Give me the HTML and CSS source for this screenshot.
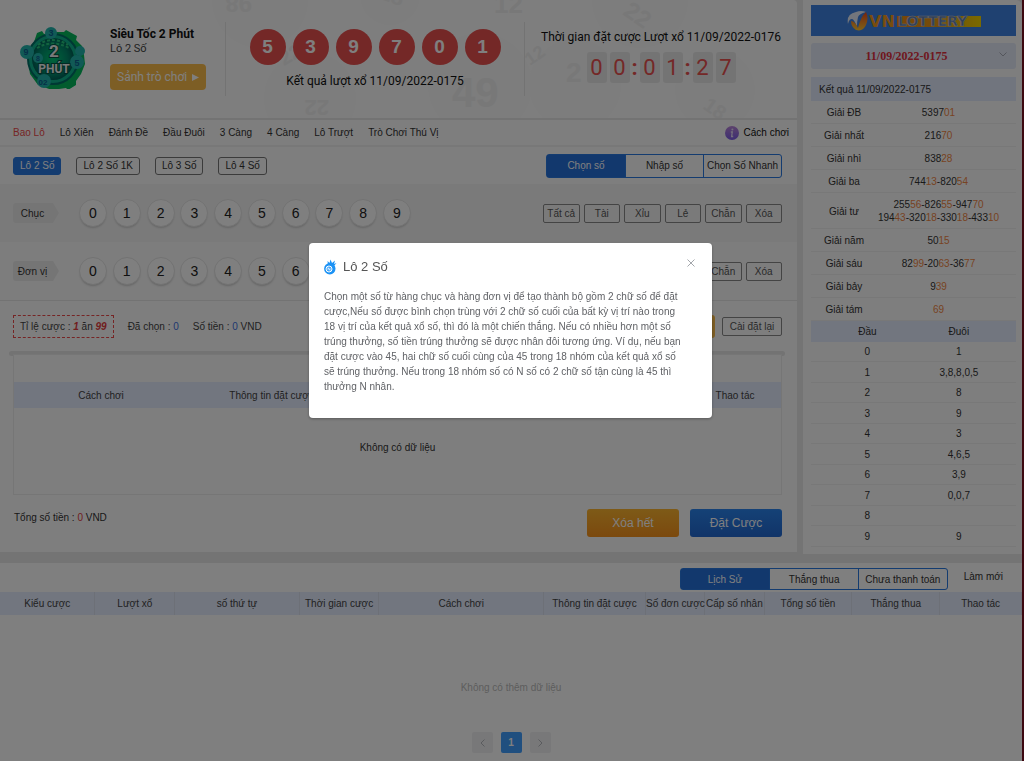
FILE: index.html
```html
<!DOCTYPE html>
<html lang="vi">
<head>
<meta charset="utf-8">
<title>Siêu Tốc 2 Phút</title>
<link rel="stylesheet" href="styles.css">
</head>
<body>
<div class="page">
  <div class="top">
    <main class="game">
      <header class="banner">
        <svg class="banner-art" viewBox="0 0 797 119" preserveAspectRatio="xMinYMin slice" aria-hidden="true">
          <g fill="#fafafa"><circle cx="260" cy="0" r="48"/><circle cx="390" cy="-5" r="30"/><circle cx="310" cy="98" r="46"/><circle cx="480" cy="85" r="52"/><circle cx="640" cy="0" r="48"/><circle cx="575" cy="85" r="46"/><circle cx="715" cy="90" r="40"/></g>
          <g fill="#f0f0f0" font-family="Liberation Sans, sans-serif" font-weight="700">
            <text font-size="24" transform="translate(252 -5) rotate(180)">98</text>
            <text font-size="22" transform="translate(378 -2) rotate(20)">18</text>
            <text x="494" y="13" font-size="26">12</text>
            <text font-size="22" transform="translate(329 100) rotate(180)">22</text>
            <text x="452" y="107" font-size="42">49</text>
            <text font-size="24" transform="translate(622 14) rotate(35)">22</text>
            <text x="566" y="82" font-size="28">2</text>
            <text font-size="20" transform="translate(702 108) rotate(35)">18</text>
            <text font-size="20" transform="translate(284 66) rotate(-30)">22</text>
            <text font-size="18" transform="translate(530 66) rotate(-35)">12</text>
          </g>
        </svg>
        <svg class="game-logo" viewBox="0 0 66 64" role="img" aria-label="2 Phút">
          <defs><radialGradient id="disc"><stop offset="0" stop-color="#00c878"/><stop offset=".7" stop-color="#008b6c"/><stop offset="1" stop-color="#006058"/></radialGradient></defs>
          <path d="M17 8l5-2 2 3 8-2 12 0 2-2 11 6-1 4 6 6 2 9 1 9-4 10-5 7 0 4-8 5-2-2-14 2-14-5-8-11-2-13 4-13z" fill="#04b85c"/>
          <circle cx="33" cy="34" r="25" fill="#0eb38c" stroke="#007068" stroke-width="2"/>
          <circle cx="33" cy="34" r="21" fill="url(#disc)"/>
          <path d="M18 20q14-10 30 0M17 23q15-9 32 0" fill="none" stroke="#25c77e" stroke-width="2" stroke-dasharray="3 2"/>
          <g fill="#22b5ac"><circle cx="31" cy="8" r="6"/><circle cx="7" cy="27" r="7"/><circle cx="60" cy="26" r="5"/><circle cx="57" cy="37" r="7"/><circle cx="24" cy="56" r="7"/><circle cx="18" cy="33" r="5"/></g>
          <g fill="#0c5f90" font-family="Liberation Sans, sans-serif" font-weight="700" font-size="9" text-anchor="middle"><text x="31" y="11">3</text><text x="6" y="30">9</text><text x="57" y="41">5</text><text x="23" y="60" font-size="8">02</text><text x="18" y="36" font-size="7">8</text></g>
          <g fill="#f2f5f4" stroke="#065447" stroke-width="2" paint-order="stroke" font-family="Roboto, sans-serif" font-weight="700" text-anchor="middle"><text x="34" y="32" font-size="17">2</text><text x="34" y="48" font-size="12">PHÚT</text></g>
        </svg>
        <div class="identity">
          <h1>Siêu Tốc 2 Phút</h1>
          <p>Lô 2 Số</p>
          <button class="lobby">Sảnh trò chơi <svg viewBox="0 0 7 7" aria-hidden="true"><path d="M0 0l7 3.500-7 3.500z" fill="#fff"/></svg></button>
        </div>
        <div class="result">
          <div class="balls"><span>5</span><span>3</span><span>9</span><span>7</span><span>0</span><span>1</span></div>
          <p>Kết quả lượt xổ 11/09/2022-0175</p>
        </div>
        <div class="countdown">
          <p>Thời gian đặt cược Lượt xổ 11/09/2022-0176</p>
          <div class="clock"><span>0</span><span>0</span><b>:</b><span>0</span><span>1</span><b>:</b><span>2</span><span>7</span></div>
        </div>
      </header>

      <nav class="kinds">
        <a href="#" class="on">Bao Lô</a><a href="#">Lô Xiên</a><a href="#">Đánh Đề</a><a href="#">Đầu Đuôi</a><a href="#">3 Càng</a><a href="#">4 Càng</a><a href="#">Lô Trượt</a><a href="#">Trò Chơi Thú Vị</a>
        <a href="#" class="help"><svg viewBox="0 0 14 14" aria-hidden="true"><defs><linearGradient id="info" x2="0" y2="1"><stop stop-color="#b985d8"/><stop offset="1" stop-color="#7a5be6"/></linearGradient></defs><circle cx="7" cy="7" r="7" fill="url(#info)"/><circle cx="7.400" cy="3.600" r="1" fill="#e6dcf8"/><path d="M5.800 6h1.500L6.600 10.500h1.600" fill="none" stroke="#e6dcf8" stroke-width="1.300"/></svg>Cách chơi</a>
      </nav>

      <div class="modes">
        <div class="variants"><button class="on">Lô 2 Số</button><button>Lô 2 Số 1K</button><button>Lô 3 Số</button><button>Lô 4 Số</button></div>
        <div class="segment pick"><button class="on">Chọn số</button><button>Nhập số</button><button>Chọn Số Nhanh</button></div>
      </div>

      <div class="digits shade">
        <span class="tag">Chục</span>
        <div class="numbers"><button>0</button><button>1</button><button>2</button><button>3</button><button>4</button><button>5</button><button>6</button><button>7</button><button>8</button><button>9</button></div>
        <div class="quick"><button>Tất cả</button><button>Tài</button><button>Xỉu</button><button>Lẻ</button><button>Chẵn</button><button>Xóa</button></div>
      </div>
      <div class="digits">
        <span class="tag">Đơn vị</span>
        <div class="numbers"><button>0</button><button>1</button><button>2</button><button>3</button><button>4</button><button>5</button><button>6</button><button>7</button><button>8</button><button>9</button></div>
        <div class="quick"><button>Tất cả</button><button>Tài</button><button>Xỉu</button><button>Lẻ</button><button>Chẵn</button><button>Xóa</button></div>
      </div>

      <div class="stake">
        <span class="odds">Tỉ lệ cược : <em>1</em> ăn <em>99</em></span>
        <span>Đã chọn : <i>0</i></span>
        <span>Số tiền : <i>0</i> VND</span>
        <button class="add">Thêm</button>
        <button class="reset">Cài đặt lại</button>
      </div>

      <div class="rail"></div>
      <section class="slip">
        <table>
          <thead><tr><th>Cách chơi</th><th>Thông tin đặt cược</th><th></th><th></th><th>Thao tác</th></tr></thead>
          <tbody><tr><td colspan="5">Không có dữ liệu</td></tr></tbody>
        </table>
      </section>
      <div class="submit">
        <p>Tổng số tiền : <b>0</b> VND</p>
        <button class="clear">Xóa hết</button>
        <button class="bet">Đặt Cược</button>
      </div>
    </main>

    <aside class="side">
      <div class="brand">
        <svg viewBox="0 0 134 20" role="img" aria-label="VNLOTTERY">
          <defs><linearGradient id="gold"><stop stop-color="#f08a14"/><stop offset=".5" stop-color="#e79b18"/><stop offset="1" stop-color="#f4d400"/></linearGradient><linearGradient id="fire" x2="0" y2="1"><stop stop-color="#e8481c"/><stop offset="1" stop-color="#ffc62e"/></linearGradient></defs>
          <path d="M1 13Q-1 3 9 1 14-1 19 1 12 3 11 6q-1 4-1 10Q7 8 5 8 2 8 1 13z" fill="#e6edf8"/>
          <path d="M19 1Q14 5 11 17 8 10 4 10 4 16 9 19 16 21 19 14 22 7 19 1z" fill="url(#fire)"/>
          <text x="22" y="16" font-family="DejaVu Sans, sans-serif" font-weight="700" font-size="16" fill="#f29a1d">VN</text>
          <path d="M50 5h84v11H50z" fill="url(#gold)"/>
          <text x="51" y="15" font-family="DejaVu Sans, sans-serif" font-size="14" font-weight="700" fill="#5f7fb4" stroke="#c4c9d6" stroke-width=".6">LOTTERY</text>
        </svg>
      </div>
      <button class="round">11/09/2022-0175<svg viewBox="0 0 8 5" aria-hidden="true"><path d="M.5.500L4 4 7.500.500" fill="none" stroke="#a9adb8"/></svg></button>
      <h2>Kết quả 11/09/2022-0175</h2>
      <table class="prizes">
        <tr><th>Giải ĐB</th><td>5397<b>01</b></td></tr>
        <tr><th>Giải nhất</th><td>216<b>70</b></td></tr>
        <tr><th>Giải nhì</th><td>838<b>28</b></td></tr>
        <tr><th>Giải ba</th><td>744<b>13</b>-820<b>54</b></td></tr>
        <tr><th>Giải tư</th><td>255<b>56</b>-826<b>55</b>-947<b>70</b><br>194<b>43</b>-320<b>18</b>-330<b>18</b>-433<b>10</b></td></tr>
        <tr><th>Giải năm</th><td>50<b>15</b></td></tr>
        <tr><th>Giải sáu</th><td>82<b>99</b>-20<b>63</b>-36<b>77</b></td></tr>
        <tr><th>Giải bảy</th><td>9<b>39</b></td></tr>
        <tr><th>Giải tám</th><td><b>69</b></td></tr>
      </table>
      <table class="tails">
        <thead><tr><th>Đầu</th><th>Đuôi</th></tr></thead>
        <tbody>
        <tr><td>0</td><td>1</td></tr><tr><td>1</td><td>3,8,8,0,5</td></tr><tr><td>2</td><td>8</td></tr><tr><td>3</td><td>9</td></tr><tr><td>4</td><td>3</td></tr><tr><td>5</td><td>4,6,5</td></tr><tr><td>6</td><td>3,9</td></tr><tr><td>7</td><td>0,0,7</td></tr><tr><td>8</td><td></td></tr><tr><td>9</td><td>9</td></tr>
        </tbody>
      </table>
    </aside>
  </div>

  <section class="history">
    <div class="history-bar">
      <div class="segment"><button class="on">Lịch Sử</button><button>Thắng thua</button><button>Chưa thanh toán</button></div>
      <button class="refresh">Làm mới</button>
    </div>
    <table class="orders">
      <colgroup><col class="kind"><col class="draw"><col class="serial"><col class="draw"><col class="rule"><col class="info"><col class="count"><col class="count"><col class="sum"><col class="sum"><col></colgroup>
      <thead><tr><th>Kiểu cược</th><th>Lượt xổ</th><th>số thứ tự</th><th>Thời gian cược</th><th>Cách chơi</th><th>Thông tin đặt cược</th><th>Số đơn cược</th><th>Cấp số nhân</th><th>Tổng số tiền</th><th>Thắng thua</th><th>Thao tác</th></tr></thead>
    </table>
    <p class="empty">Không có thêm dữ liệu</p>
    <div class="pager">
      <button aria-label="Trang trước"><svg viewBox="0 0 5 8"><path d="M4.500.500L1 4l3.500 3.500" fill="none" stroke="#b4b7bd"/></svg></button>
      <button class="on">1</button>
      <button aria-label="Trang sau"><svg viewBox="0 0 5 8"><path d="M.5.500L4 4 .5 7.500" fill="none" stroke="#b4b7bd"/></svg></button>
    </div>
  </section>
</div>

<div class="mask">
  <div class="dialog" role="dialog" aria-modal="true" aria-labelledby="rule-title">
    <div class="dialog-head">
      <svg class="rule-icon" viewBox="0 0 13 16" aria-hidden="true"><path d="M4 6L3.500 2l2 2L6.500.500 8 4l3-2.500L10 5l2.500-1L10 7z" fill="#1b92f5"/><circle cx="5.800" cy="9.800" r="5.700" fill="#1b92f5"/><circle cx="5" cy="10" r="3" fill="none" stroke="#fff"/><path d="M4 11.500v-3l2 3v-3" fill="none" stroke="#fff" stroke-width=".8"/></svg>
      <h3 id="rule-title">Lô 2 Số</h3>
      <button class="close" aria-label="Đóng"><svg viewBox="0 0 8 8"><path d="M.5.500l7 7M7.500.500l-7 7" fill="none" stroke="#a3a6ab"/></svg></button>
    </div>
    <p>Chọn một số từ hàng chục và hàng đơn vị để tạo thành bộ gồm 2 chữ số để đặt cược,Nếu số được bình chọn trùng với 2 chữ số cuối của bất kỳ vị trí nào trong 18 vị trí của kết quả xổ số, thì đó là một chiến thắng. Nếu có nhiều hơn một số trúng thưởng, số tiền trúng thưởng sẽ được nhân đôi tương ứng. Ví dụ, nếu bạn đặt cược vào 45, hai chữ số cuối cùng của 45 trong 18 nhóm của kết quả xổ số sẽ trúng thưởng. Nếu trong 18 nhóm số có N số có 2 chữ số tận cùng là 45 thì thưởng N nhân.</p>
  </div>
</div>
</body>
</html>
```
FILE: styles.css
```css
* { box-sizing: border-box; }
body { margin: 0; background: #7a1020; color: #333; font: 10px/15px "Liberation Sans", Arial, sans-serif; }
h1, h2, h3, p { margin: 0; font-weight: 400; }
button { font: inherit; color: inherit; padding: 0; border: 0; background: none; white-space: nowrap; }
a { color: inherit; text-decoration: none; }
table { width: 100%; border-collapse: collapse; table-layout: fixed; }
th { font-weight: 400; padding: 0; }
td { padding: 0; text-align: center; }

.page { min-height: 100vh; margin-right: 2px; background: #e8e8e8; display: flex; flex-direction: column; }
.top { display: flex; gap: 6px; align-items: stretch; padding-bottom: 9px; }
.game { flex: 1; background: #fdfdfd; margin-bottom: 2px; border-top-right-radius: 4px; }
.side { width: 219px; background: #fdfdfd; padding: 5px 6px 5px 8px; border-top-right-radius: 6px; }

.banner { position: relative; height: 120px; display: flex; font-family: Roboto, sans-serif; border-bottom: 2px solid #e6e6e6; overflow: hidden; color: #111; font-size: 12px; }
.banner > * { position: relative; }
.banner > .banner-art { position: absolute; inset: 0; width: 100%; height: 100%; }
.game-logo { width: 66px; height: 64px; margin: 25px 24px 0 20px; }
.identity { width: 115px; padding-top: 26px; }
.identity h1 { font-size: 12px; font-weight: 700; line-height: 16px; }
.identity p { font-size: 11px; line-height: 14px; color: #444; }
.lobby { margin-top: 8px; height: 26px; padding: 0 7px; border-radius: 4px; background: #fbbc4a; color: #fff; font-size: 12px; line-height: 26px; }
.lobby svg { width: 7px; height: 7px; margin-left: 2px; }
.result { flex: 1; margin: 22px 0; padding-top: 7px; border: 1px solid #e6e6e6; border-width: 0 1px; text-align: center; height: 74px; }
.balls { display: flex; justify-content: center; gap: 7px; }
.balls span { width: 36px; height: 36px; border-radius: 50%; background: #e8504f; color: #fff; font: 700 19px/36px "Liberation Sans", sans-serif; }
.result p { line-height: 20px; margin-top: 6px; }
.countdown { width: 272px; padding-top: 28px; text-align: center; }
.countdown p { line-height: 18px; }
.clock { display: flex; justify-content: center; gap: 3px; margin: 6px 0 0; color: #e8504f; font-size: 22px; line-height: 31px; }
.clock span { width: 20px; height: 31px; background: #e9e9e9; border-radius: 3px; }
.clock b { width: 4px; display: flex; justify-content: center; }

.kinds { height: 27px; display: flex; gap: 15px; align-items: center; padding: 0 8px 0 13px; border-bottom: 2px solid #f0f0f0; }
.kinds .on { color: #ec4a4a; }
.kinds .help { margin-left: auto; display: flex; align-items: center; gap: 5px; color: #111; }
.help svg { width: 14px; height: 14px; }

.modes { height: 37px; display: flex; justify-content: space-between; align-items: center; padding: 0 15px 0 13px; }
.variants { display: flex; gap: 15px; }
.variants button { height: 18px; padding: 0 6px; border: 1px solid #777; border-radius: 3px; line-height: 15px; }
.variants .on { background: #2878e0; border-color: #2878e0; color: #fff; }
.segment { width: 268px; display: grid; grid-template-columns: repeat(3, 1fr); border: 1px solid #2878e0; border-radius: 3px; }
.segment button { height: 20px; border-left: 1px solid #2878e0; }
.segment button:first-child { border-left: 0; }
.segment .on { background: #2470da; color: #fff; }
.pick { width: 236px; }
.pick button { height: 22px; }

.digits { height: 58px; display: flex; align-items: center; padding: 0 15px 0 13px; background: #fafafa; }
.shade { background: #f5f5f5; }
.tag { width: 46px; height: 20px; margin-right: 20px; padding-right: 7px; background: #ebebeb; border-radius: 3px; clip-path: polygon(0 0, 40px 0, 100% 50%, 40px 100%, 0 100%); line-height: 21px; text-align: center; }
.numbers { width: 332px; display: flex; justify-content: space-between; }
.numbers button { width: 28px; height: 28px; border-radius: 50%; border: 1px solid #e5e5e5; background: #fff; box-shadow: 0 2px 2px -1px #ccc; font-size: 14px; color: #222; }
.quick { width: 239px; margin-left: auto; display: grid; grid-template-columns: repeat(6, 1fr); gap: 4px; }
.quick button, .reset { height: 19px; border: 1px solid #888; border-radius: 2px; line-height: 17px; color: #555; }

.stake { height: 51px; display: flex; align-items: center; gap: 14px; padding: 0 15px 0 13px; border-top: 1px solid #e6e6e6; color: #444; }
.odds { height: 23px; padding: 0 6px; border: 1px dashed #ec4a4a; line-height: 21px; }
.odds em { color: #e23c3c; font-weight: 700; }
.stake i { color: #3c6fe0; font-style: normal; }
.add { margin-left: auto; margin-right: -7px; width: 60px; height: 23px; border-radius: 3px; background: #fbbc4a; color: #fff; }
.reset { width: 60px; }

.rail { height: 5px; margin: 0 12px 0 9px; border-radius: 3px; background: #e6e6e6; }
.slip { margin: -2px 15px 0 13px; padding-top: 27px; border: 1px solid #ececec; background: #fdfdfd; }
.slip thead th { height: 26px; background: #e4ecff; color: #444; }
.slip th:last-child { width: 92px; }
.slip th:first-child { width: 174px; }
.slip tbody td { height: 86px; padding-bottom: 8px; }
.submit { display: flex; gap: 11px; align-items: flex-start; padding: 14px 15px 15px 14px; }
.submit p { margin-right: auto; line-height: 17px; }
.submit b { color: #e23c3c; font-weight: 400; }
.submit button { width: 92px; height: 28px; border-radius: 3px; color: #fff; font-size: 12px; }
.submit .clear { background: linear-gradient(#fcb52f, #f7921c); }
.submit .bet { background: linear-gradient(#2a84ee, #2268d0); }

.brand { height: 31px; background: #3e82e2; display: flex; align-items: center; justify-content: center; }
.brand svg { width: 134px; height: 20px; }
.round { position: relative; display: block; width: 100%; height: 26px; margin: 7px 0 8px; padding-right: 14px; border-radius: 3px; background: #e4eaf8; color: #e0303c; font: 700 12px/26px "Liberation Serif", serif; }
.round svg { position: absolute; right: 9px; top: 9px; width: 8px; height: 5px; }
.side h2 { height: 24px; padding-left: 8px; background: #e2eafc; font-size: 10px; line-height: 25px; }
.prizes tr, .tails tbody tr { border-bottom: 1px solid #f1f1f1; }
.prizes th { width: 66px; }
.prizes td, .prizes th { padding: 5px 0 4px; line-height: 13px; white-space: nowrap; }
.prizes td { padding-right: 16px; }
.prizes b { font-weight: 400; color: #f08644; }
.tails { height: 226px; }
.tails thead { background: #e4ecff; }
.tails thead th { width: 55%; height: 21px; }
.tails thead th + th { width: 45%; padding-right: 22px; }
.tails td + td { padding-right: 22px; }

.history { flex: 1; background: #fff; }
.history-bar { height: 29px; padding: 5px 19px 0 0; display: flex; justify-content: flex-end; gap: 16px; align-items: flex-start; }
.refresh { line-height: 18px; }
.orders th { height: 23px; background: #e4ecff; border-right: 1px solid #dbe1ee; white-space: nowrap; color: #444; }
.kind { width: 9.300%; }
.draw { width: 7.800%; }
.serial { width: 12.200%; }
.rule { width: 16.100%; }
.info { width: 10%; }
.count { width: 5.800%; }
.sum { width: 8.600%; }
.empty { margin-top: 65px; text-align: center; color: #bbb; }
.pager { margin-top: 37px; display: flex; justify-content: center; gap: 8px; }
.pager button { width: 21px; height: 21px; border-radius: 2px; background: #f1f1f3; display: grid; place-items: center; font-weight: 700; }
.pager svg { width: 5px; height: 8px; }
.pager .on { background: #409eff; color: #fff; }

.mask { position: fixed; inset: 0; background: rgba(0, 0, 0, .5); display: flex; justify-content: center; align-items: flex-start; padding: 243px 3px 0 0; }
.dialog { width: 403px; padding: 14px 15px 24px; border-radius: 4px; background: #fff; box-shadow: 0 1px 3px rgba(0, 0, 0, .3); color: #606266; }
.dialog p { padding-right: 13px; }
.dialog-head { display: flex; align-items: center; gap: 6px; height: 20px; margin-bottom: 12px; }
.dialog-head h3 { font-size: 13px; line-height: 20px; color: #555; }
.rule-icon { width: 13px; height: 16px; }
.close { margin: -9px 2px 0 auto; line-height: 0; }
.close svg { width: 8px; height: 8px; }
```
